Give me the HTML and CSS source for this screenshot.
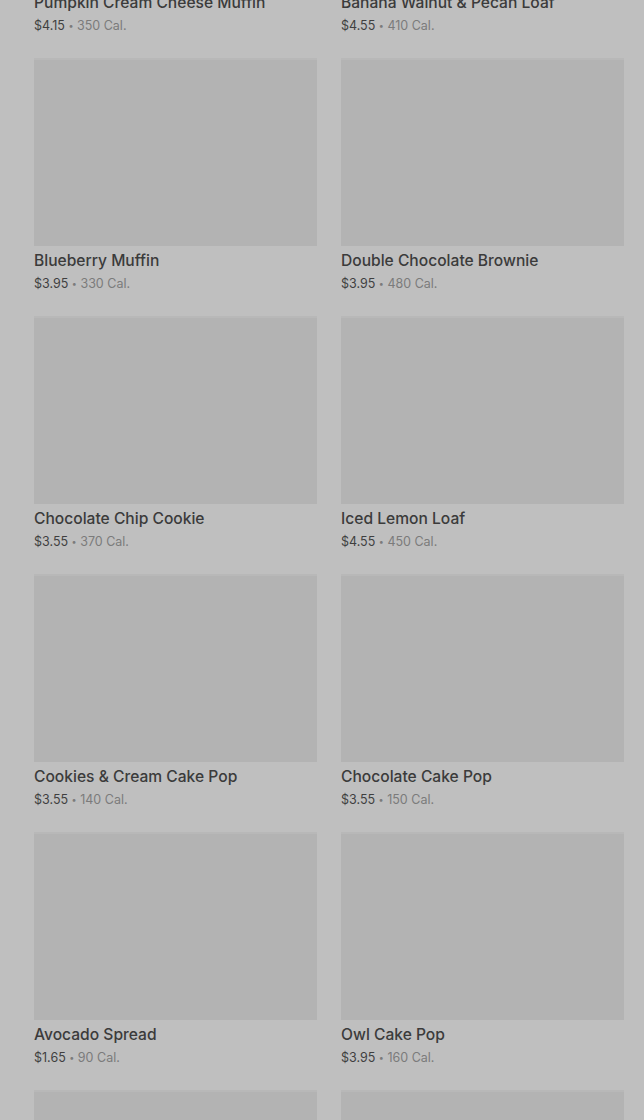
FILE: index.html
```html
<!DOCTYPE html>
<html lang="en">

<head>
    <meta charset="UTF-8">
    <meta name="viewport" content="width=device-width, initial-scale=1.0">
    <title>Bakery</title>
    <link rel="stylesheet" href="styles.css">
</head>

<body>
    <div class="menu">
        <div class="grid">
            <div class="item">
                <div class="photo"></div>
                <h3>Pumpkin Cream Cheese Muffin</h3>
                <p class="info"><span class="price">$4.15</span> <span class="dot">•</span> 350 Cal.</p>
            </div>
            <div class="item">
                <div class="photo"></div>
                <h3>Banana Walnut &amp; Pecan Loaf</h3>
                <p class="info"><span class="price">$4.55</span> <span class="dot">•</span> 410 Cal.</p>
            </div>
            <div class="item">
                <div class="photo"></div>
                <h3>Blueberry Muffin</h3>
                <p class="info"><span class="price">$3.95</span> <span class="dot">•</span> 330 Cal.</p>
            </div>
            <div class="item">
                <div class="photo"></div>
                <h3>Double Chocolate Brownie</h3>
                <p class="info"><span class="price">$3.95</span> <span class="dot">•</span> 480 Cal.</p>
            </div>
            <div class="item">
                <div class="photo"></div>
                <h3>Chocolate Chip Cookie</h3>
                <p class="info"><span class="price">$3.55</span> <span class="dot">•</span> 370 Cal.</p>
            </div>
            <div class="item">
                <div class="photo"></div>
                <h3>Iced Lemon Loaf</h3>
                <p class="info"><span class="price">$4.55</span> <span class="dot">•</span> 450 Cal.</p>
            </div>
            <div class="item">
                <div class="photo"></div>
                <h3>Cookies &amp; Cream Cake Pop</h3>
                <p class="info"><span class="price">$3.55</span> <span class="dot">•</span> 140 Cal.</p>
            </div>
            <div class="item">
                <div class="photo"></div>
                <h3>Chocolate Cake Pop</h3>
                <p class="info"><span class="price">$3.55</span> <span class="dot">•</span> 150 Cal.</p>
            </div>
            <div class="item">
                <div class="photo"></div>
                <h3>Avocado Spread</h3>
                <p class="info"><span class="price">$1.65</span> <span class="dot">•</span> 90 Cal.</p>
            </div>
            <div class="item">
                <div class="photo"></div>
                <h3>Owl Cake Pop</h3>
                <p class="info"><span class="price">$3.95</span> <span class="dot">•</span> 160 Cal.</p>
            </div>
            <div class="item">
                <div class="photo"></div>
                <h3>Birthday Cake Pop</h3>
                <p class="info"><span class="price">$3.55</span> <span class="dot">•</span> 160 Cal.</p>
            </div>
            <div class="item">
                <div class="photo"></div>
                <h3>Vanilla Bean Custard Danish</h3>
                <p class="info"><span class="price">$3.95</span> <span class="dot">•</span> 280 Cal.</p>
            </div>
        </div>
    </div>
</body>

</html>
```

FILE: styles.css
```css
html,
body {
    margin: 0;
    height: 100%;
    overflow: hidden;
    background: #bfbfbf;
}

body {
    font-family: Inter, "Noto Sans", sans-serif;
}

.menu {
    padding: 0 20px 0 34px;
}

.grid {
    display: grid;
    grid-template-columns: 283px 283px;
    column-gap: 24px;
    row-gap: 23px;
    margin-top: -200px;
}

.photo {
    height: 188px;
    background: #b3b3b3;
    border-top: 2px solid #b8b8b8;
    box-sizing: border-box;
}

.item h3 {
    margin: 5px 0 0;
    font-size: 15.6px;
    line-height: 20px;
    font-weight: 500;
    color: #3b3b3b;
    white-space: nowrap;
}

.info {
    margin: 4px 0 0;
    font-size: 12.5px;
    line-height: 18px;
    color: #7b7b7b;
}

.price {
    color: #3f3f3f;
}

.dot {
    font-size: 9px;
    vertical-align: 1px;
}
```
